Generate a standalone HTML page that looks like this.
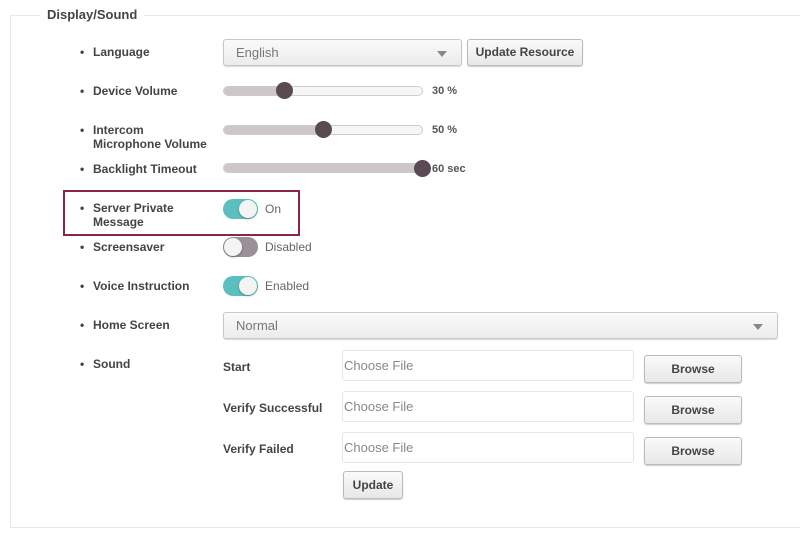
<!DOCTYPE html>
<html><head><meta charset="utf-8"><style>
body{margin:0;width:800px;height:536px;background:#fff;position:relative;overflow:hidden;font-family:"Liberation Sans",sans-serif;}
.a{position:absolute;}
.fs{left:10px;top:15px;width:800px;height:511px;border:1px solid #e8e8e8;border-right:none;}
.lg{left:40px;top:7px;background:#fff;padding:0 7px;font-size:13px;font-weight:bold;color:#444;}
.lb{left:80px;font-size:12px;font-weight:bold;color:#444;line-height:14px;}
.lb:before{content:"•";position:absolute;left:0;}
.lb span{display:block;padding-left:13px;}
.sel{border:1px solid #c8c8c8;border-radius:3px;background:linear-gradient(#fafafa,#ececec);box-shadow:0 1px 1px rgba(0,0,0,.15);font-size:13px;color:#777;box-sizing:border-box;padding-left:12px;}
.sel:after{content:"";position:absolute;right:14px;top:11px;border:5px solid transparent;border-top:6px solid #888;border-bottom:none;}
.btn{border:1px solid #bbb;border-radius:3px;background:linear-gradient(#fafafa,#e8e8e8);box-shadow:0 1px 1px rgba(0,0,0,.2);font-size:12px;font-weight:bold;color:#444;text-align:center;box-sizing:border-box;}
.tr{left:223px;width:200px;height:10px;border-radius:5px;background:#f6f6f6;border:1px solid #ccc;box-sizing:border-box;overflow:hidden;}
.tr i{display:block;height:100%;background:#cdc7c9;}
.th{width:17px;height:17px;border-radius:50%;background:#5a4a52;}
.val{font-size:11px;font-weight:bold;color:#555;}
.tg{left:223px;width:35px;height:20px;border-radius:10px;}
.tg b{position:absolute;top:1px;width:18px;height:18px;border-radius:50%;background:#f4f4f4;box-shadow:0 1px 2px rgba(0,0,0,.3);}
.tt{font-size:12px;color:#666;}
.in{left:342px;width:292px;height:31px;border:1px solid #e6e6e6;border-radius:3px;box-sizing:border-box;font-size:13px;color:#888;padding:7px 0 0 1px;}
.sl{left:223px;font-size:12px;font-weight:bold;color:#444;}
</style></head><body>
<div class="a fs"></div>
<div class="a lg">Display/Sound</div>

<div class="a lb" style="top:45px"><span>Language</span></div>
<div class="a lb" style="top:84px"><span>Device Volume</span></div>
<div class="a lb" style="top:123px"><span>Intercom<br>Microphone Volume</span></div>
<div class="a lb" style="top:162px"><span>Backlight Timeout</span></div>
<div class="a lb" style="top:201px"><span>Server Private<br>Message</span></div>
<div class="a lb" style="top:240px"><span>Screensaver</span></div>
<div class="a lb" style="top:279px"><span>Voice Instruction</span></div>
<div class="a lb" style="top:318px"><span>Home Screen</span></div>
<div class="a lb" style="top:357px"><span>Sound</span></div>

<div class="a sel" style="left:223px;top:39px;width:239px;height:27px;line-height:25px">English</div>
<div class="a btn" style="left:467px;top:39px;width:116px;height:27px;line-height:25px">Update Resource</div>

<div class="a tr" style="top:86px"><i style="width:61px"></i></div>
<div class="a th" style="left:276px;top:82px"></div>
<div class="a val" style="left:432px;top:85px">30 %</div>
<div class="a tr" style="top:125px"><i style="width:100px"></i></div>
<div class="a th" style="left:315px;top:121px"></div>
<div class="a val" style="left:432px;top:124px">50 %</div>
<div class="a tr" style="top:163px"><i style="width:200px"></i></div>
<div class="a th" style="left:414px;top:160px"></div>
<div class="a val" style="left:432px;top:163px">60 sec</div>

<div class="a" style="left:63px;top:190px;width:233px;height:42px;border:2px solid #8d2444"></div>
<div class="a tg" style="top:199px;background:#5cbfbf"><b style="left:16px"></b></div>
<div class="a tt" style="left:265px;top:202px">On</div>
<div class="a tg" style="top:237px;background:#9a9095"><b style="left:1px"></b></div>
<div class="a tt" style="left:265px;top:240px">Disabled</div>
<div class="a tg" style="top:276px;background:#5cbfbf"><b style="left:16px"></b></div>
<div class="a tt" style="left:265px;top:279px">Enabled</div>

<div class="a sel" style="left:223px;top:312px;width:555px;height:27px;line-height:25px">Normal</div>

<div class="a sl" style="top:360px">Start</div>
<div class="a sl" style="top:401px">Verify Successful</div>
<div class="a sl" style="top:442px">Verify Failed</div>
<div class="a in" style="top:350px">Choose File</div>
<div class="a in" style="top:391px">Choose File</div>
<div class="a in" style="top:432px">Choose File</div>
<div class="a btn" style="left:644px;top:355px;width:98px;height:28px;line-height:26px">Browse</div>
<div class="a btn" style="left:644px;top:396px;width:98px;height:28px;line-height:26px">Browse</div>
<div class="a btn" style="left:644px;top:437px;width:98px;height:28px;line-height:26px">Browse</div>
<div class="a btn" style="left:343px;top:471px;width:60px;height:28px;line-height:26px">Update</div>
</body></html>
